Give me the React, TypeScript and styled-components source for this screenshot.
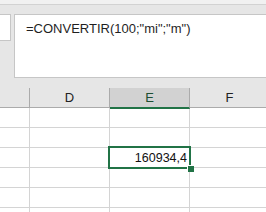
import styled, { createGlobalStyle } from "styled-components";

const GlobalStyle = createGlobalStyle`
  html, body {
    margin: 0;
    padding: 0;
    background: #ffffff;
    overflow: hidden;
  }
  body {
    font-family: "Liberation Sans", Arial, sans-serif;
  }
`;

const Window = styled.div`
  width: 266px;
  height: 212px;
  overflow: hidden;
  display: flex;
  flex-direction: column;
`;

const RibbonEdge = styled.div`
  height: 4px;
  background: #f1f1f1;
  border-bottom: 1px solid #d2d2d2;
  flex-shrink: 0;
`;

const FormulaBar = styled.div`
  background: #e6e6e6;
  display: flex;
  align-items: flex-start;
  gap: 3px;
  padding: 9px 0 10px 0;
  flex-shrink: 0;
`;

const NameBox = styled.div`
  width: 10px;
  height: 25px;
  background: #ffffff;
  border: 1px solid #c6c6c6;
  border-left: none;
  flex-shrink: 0;
`;

const FormulaBox = styled.div`
  flex: 1;
  height: 64px;
  background: #ffffff;
  border: 1px solid #c6c6c6;
  border-right: none;
  padding: 6px 0 0 11px;
  box-sizing: border-box;
  font-size: 13px;
  color: #1f1f1f;
  white-space: nowrap;
  overflow: hidden;
`;

const Sheet = styled.div`
  display: grid;
  grid-template-columns: 30px 80px 80px 80px;
  grid-auto-rows: 20px;
  flex: 1;
`;

const ColHeader = styled.div<{ $selected?: boolean }>`
  background: ${(p) => (p.$selected ? "#d2d2d2" : "#e6e6e6")};
  border-right: 1px solid #ababab;
  border-bottom: ${(p) => (p.$selected ? "2px solid #217346" : "1px solid #ababab")};
  margin-bottom: ${(p) => (p.$selected ? "-1px" : "0")};
  display: flex;
  align-items: center;
  justify-content: center;
  font-size: 13px;
  color: ${(p) => (p.$selected ? "#1d4f33" : "#222222")};
  box-sizing: border-box;
  position: relative;
  z-index: ${(p) => (p.$selected ? 1 : 0)};
`;

const Cell = styled.div`
  border-right: 1px solid #d4d4d4;
  border-bottom: 1px solid #d4d4d4;
  box-sizing: border-box;
  background: #ffffff;
  display: flex;
  align-items: center;
  justify-content: flex-end;
  padding-right: 2px;
  font-size: 12.5px;
  color: #111111;
  position: relative;
`;

const Selection = styled.div`
  position: absolute;
  left: -2px;
  top: -2px;
  width: 83px;
  height: 23px;
  border: 2px solid #217346;
  box-sizing: border-box;
  pointer-events: none;
  z-index: 2;
`;

const FillHandle = styled.div`
  position: absolute;
  right: -5px;
  bottom: -5px;
  width: 7px;
  height: 7px;
  box-sizing: border-box;
  background: #217346;
  border: 1px solid #ffffff;
  border-right-width: 0;
  border-bottom-width: 0;
`;

const Value = styled.span`
  padding-top: 1px;
`;

const columns = ["", "D", "E", "F"];
const rowCount = 6;

const App = () => {
  return (
    <Window>
      <GlobalStyle />
      <RibbonEdge />
      <FormulaBar>
        <NameBox />
        <FormulaBox>=CONVERTIR(100;"mi";"m")</FormulaBox>
      </FormulaBar>
      <Sheet>
        {columns.map((c) => (
          <ColHeader key={"h" + c} $selected={c === "E"}>
            {c}
          </ColHeader>
        ))}
        {Array.from({ length: rowCount }).map((_, r) =>
          columns.map((c) => {
            const active = r === 2 && c === "E";
            return (
              <Cell key={`${r}-${c}`}>
                {active && (
                  <>
                    <Value>160934,4</Value>
                    <Selection>
                      <FillHandle />
                    </Selection>
                  </>
                )}
              </Cell>
            );
          })
        )}
      </Sheet>
    </Window>
  );
};

export default App;
